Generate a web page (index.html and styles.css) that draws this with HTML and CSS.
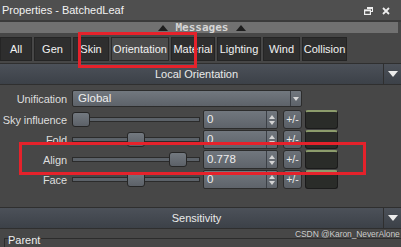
FILE: index.html
```html
<!DOCTYPE html>
<html lang="en">
<head>
  <meta charset="UTF-8" />
  <title>Properties - BatchedLeaf</title>
  <link rel="stylesheet" href="styles.css">
</head>
<body>
  <div class="window">
    <div class="titlebar">
      <span class="title">Properties - BatchedLeaf</span>
      <div class="title-icons">
        <svg width="9" height="8" viewBox="0 0 9 8">
          <path d="M3 0.5h5.5v4h-2" fill="none" stroke="#eee" stroke-width="1.2"/>
          <rect x="0.6" y="3" width="5.8" height="4.4" fill="none" stroke="#eee" stroke-width="1.2"/>
          <path d="M3 1.2h5" stroke="#eee" stroke-width="1.6"/>
          <path d="M0.6 3.6h5.8" stroke="#eee" stroke-width="1.4"/>
        </svg>
        <svg width="8" height="8" viewBox="0 0 8 8">
          <path d="M1 1L7 7M7 1L1 7" stroke="#eee" stroke-width="1.8"/>
        </svg>
      </div>
    </div>

    <div class="messages">
      <span class="up-tri"></span>
      <span>Messages</span>
      <span class="up-tri"></span>
    </div>

    <div class="tabs">
      <div class="tab">All</div>
      <div class="tab">Gen</div>
      <div class="tab">Skin</div>
      <div class="tab active">Orientation</div>
      <div class="tab">Material</div>
      <div class="tab">Lighting</div>
      <div class="tab">Wind</div>
      <div class="tab">Collision</div>
    </div>

    <div class="section">
      <div class="section-title">Local Orientation</div>
      <div class="section-arrow"><span class="down-tri"></span></div>
    </div>

    <div class="rows">
      <div class="row row-select">
        <label>Unification</label>
        <div class="select">
          <span class="select-text">Global</span>
          <span class="select-btn"><span class="small-down"></span></span>
        </div>
      </div>

      <div class="row">
        <label>Sky influence</label>
        <div class="slider"><div class="track"></div><div class="handle" style="left:0px"></div></div>
        <div class="num"><span class="num-text">0</span><span class="spin"><i class="s-up"></i><i class="s-down"></i></span></div>
        <div class="pm">+/-</div>
        <div class="swatch"></div>
      </div>

      <div class="row">
        <label>Fold</label>
        <div class="slider"><div class="track"></div><div class="handle" style="left:55px"></div></div>
        <div class="num"><span class="num-text">0</span><span class="spin"><i class="s-up"></i><i class="s-down"></i></span></div>
        <div class="pm">+/-</div>
        <div class="swatch"></div>
      </div>

      <div class="row">
        <label>Align</label>
        <div class="slider"><div class="track"></div><div class="handle" style="left:97px"></div></div>
        <div class="num"><span class="num-text">0.778</span><span class="spin"><i class="s-up"></i><i class="s-down"></i></span></div>
        <div class="pm">+/-</div>
        <div class="swatch"></div>
      </div>

      <div class="row">
        <label>Face</label>
        <div class="slider"><div class="track"></div><div class="handle" style="left:55px"></div></div>
        <div class="num"><span class="num-text">0</span><span class="spin"><i class="s-up"></i><i class="s-down"></i></span></div>
        <div class="pm">+/-</div>
        <div class="swatch"></div>
      </div>
    </div>

    <div class="section section-sens">
      <div class="section-title">Sensitivity</div>
      <div class="section-arrow"><span class="down-tri"></span></div>
    </div>

    <div class="parent">
      <span class="parent-label">Parent</span>
      <div class="parent-box"></div>
    </div>

    <div class="mark mark-tabs"></div>
    <div class="mark mark-align"></div>
    <div class="watermark">CSDN @Karon_NeverAlone</div>
  </div>
</body>
</html>
```

FILE: styles.css
```css
* {
  box-sizing: border-box;
  margin: 0;
  padding: 0;
}

body {
  background-color: #474747;
  font-family: "Liberation Sans", Arial, sans-serif;
  font-size: 11px;
  color: #e6e6e6;
  overflow: hidden;
}

.window {
  position: relative;
  width: 401px;
  height: 247px;
  overflow: hidden;
}

.titlebar {
  display: flex;
  justify-content: space-between;
  align-items: center;
  height: 20px;
  padding: 0 11px 0 2px;
  background-color: #4f4f4f;
  border-bottom: 2px solid #3b3b3b;
  box-sizing: content-box;
}

.title {
  font-size: 11px;
  color: #f2f2f2;
}

.title-icons {
  display: flex;
  align-items: center;
  gap: 9px;
  padding-top: 1px;
}

.messages {
  display: flex;
  justify-content: center;
  align-items: center;
  gap: 8px;
  height: 11px;
  margin-right: 3px;
  padding-left: 6px;
  background-color: #717171;
  font-family: "DejaVu Sans Mono", monospace;
  font-weight: bold;
  font-size: 11px;
  line-height: 11px;
  color: #d6d6d6;
}

.up-tri {
  width: 0;
  height: 0;
  border-left: 5px solid transparent;
  border-right: 5px solid transparent;
  border-bottom: 6px solid #1e1e1e;
}

.tabs {
  display: grid;
  grid-template-columns: 32px 37px 36px 58px 44px 44px 37px 45px;
  column-gap: 2px;
  padding: 4px 0 2px 0;
}

.tab {
  height: 24px;
  line-height: 22px;
  text-align: center;
  white-space: nowrap;
  background-color: #2e2e2e;
  border: 1px solid #252525;
  color: #f2f2f2;
}

.tab.active {
  background-color: #4b4b4b;
  border-color: #2a2a2a;
}

.section {
  display: flex;
  height: 22px;
  border-top: 1px solid #2f2f2f;
  border-bottom: 1px solid #2f2f2f;
}

.section-title {
  flex: 1;
  text-align: center;
  line-height: 20px;
  color: #eaeaea;
  background: linear-gradient(#4c5159, #3c4148);
  padding-left: 10px;
}

.section-arrow {
  display: flex;
  justify-content: center;
  align-items: center;
  width: 18px;
  border-left: 1px solid #2f2f2f;
  background: linear-gradient(#4c5159, #3c4148);
}

.down-tri {
  width: 0;
  height: 0;
  border-left: 5px solid transparent;
  border-right: 5px solid transparent;
  border-top: 6px solid #ececec;
}

.rows {
  display: flex;
  flex-direction: column;
  gap: 1px;
  padding-top: 5px;
}

.row {
  display: flex;
  align-items: center;
  height: 19px;
}

.row label {
  flex-shrink: 0;
  width: 67px;
  margin-right: 5px;
  text-align: right;
  white-space: nowrap;
  color: #dedede;
  font-size: 11px;
  letter-spacing: -0.1px;
}

.row-select {
  height: 17px;
  margin-bottom: 2px;
}

.select {
  display: flex;
  width: 230px;
  height: 17px;
  border: 1px solid #2c2c2c;
  border-radius: 2px;
  background: linear-gradient(#72787f, #5d6269);
}

.select-text {
  flex: 1;
  padding-left: 5px;
  line-height: 15px;
  font-size: 11.5px;
  color: #eeeeee;
}

.select-btn {
  display: flex;
  justify-content: center;
  align-items: center;
  width: 11px;
  border-left: 1px solid #3a3e44;
}

.small-down {
  width: 0;
  height: 0;
  border-left: 3px solid transparent;
  border-right: 3px solid transparent;
  border-top: 4px solid #d8d8d8;
}

.slider {
  position: relative;
  flex-shrink: 0;
  width: 128px;
  height: 19px;
}

.track {
  margin-top: 7px;
  height: 5px;
  background-color: #5c6269;
  border: 1px solid #2b2b2b;
}

.handle {
  position: absolute;
  top: 2px;
  width: 18px;
  height: 15px;
  border: 1px solid #262626;
  border-radius: 3px;
  background: linear-gradient(#737980, #5c6168);
}

.num {
  display: flex;
  flex-shrink: 0;
  width: 75px;
  height: 19px;
  margin-left: 3px;
  border: 1px solid #2c2c2c;
  border-radius: 2px;
  background: linear-gradient(#71777e, #5e636a);
}

.num-text {
  flex: 1;
  padding-left: 3px;
  line-height: 17px;
  font-size: 11.5px;
  color: #ececec;
}

.spin {
  display: flex;
  flex-direction: column;
  justify-content: center;
  align-items: center;
  gap: 2px;
  width: 11px;
  border-left: 1px solid #3c4046;
}

.s-up {
  width: 0;
  height: 0;
  border-left: 3px solid transparent;
  border-right: 3px solid transparent;
  border-bottom: 4px solid #d4d4d4;
}

.s-down {
  width: 0;
  height: 0;
  border-left: 3px solid transparent;
  border-right: 3px solid transparent;
  border-top: 4px solid #d4d4d4;
}

.pm {
  flex-shrink: 0;
  width: 19px;
  height: 19px;
  margin-left: 5px;
  line-height: 17px;
  text-align: center;
  border: 1px solid #2c2c2c;
  border-radius: 3px;
  background: linear-gradient(#6b7178, #5a5f66);
  color: #eeeeee;
  font-size: 10.5px;
}

.swatch {
  flex-shrink: 0;
  width: 33px;
  height: 19px;
  margin-left: 3px;
  border: 1px solid #1b1b1b;
  border-top: 2px solid #8c9c6c;
  border-radius: 3px;
  background-color: #2a2c29;
}

.section-sens {
  margin-top: 18px;
}

.parent {
  position: relative;
  padding: 5px 0 0 4px;
}

.parent-label {
  position: relative;
  z-index: 1;
  padding-left: 4px;
  color: #eeeeee;
}

.parent-box {
  margin-top: -8px;
  height: 20px;
  border-top: 1px solid #2c2c2c;
  border-left: 1px solid #2c2c2c;
}

.mark {
  position: absolute;
  border: 3px solid #e5222b;
}

.mark-tabs {
  left: 78px;
  top: 32px;
  width: 119px;
  height: 36px;
}

.mark-align {
  left: 19px;
  top: 142px;
  width: 347px;
  height: 33px;
}

.watermark {
  position: absolute;
  left: 295px;
  top: 229px;
  font-size: 8.5px;
  letter-spacing: -0.1px;
  color: #cfcfcf;
  text-shadow: 0 0 1px #333;
  white-space: nowrap;
}
```
